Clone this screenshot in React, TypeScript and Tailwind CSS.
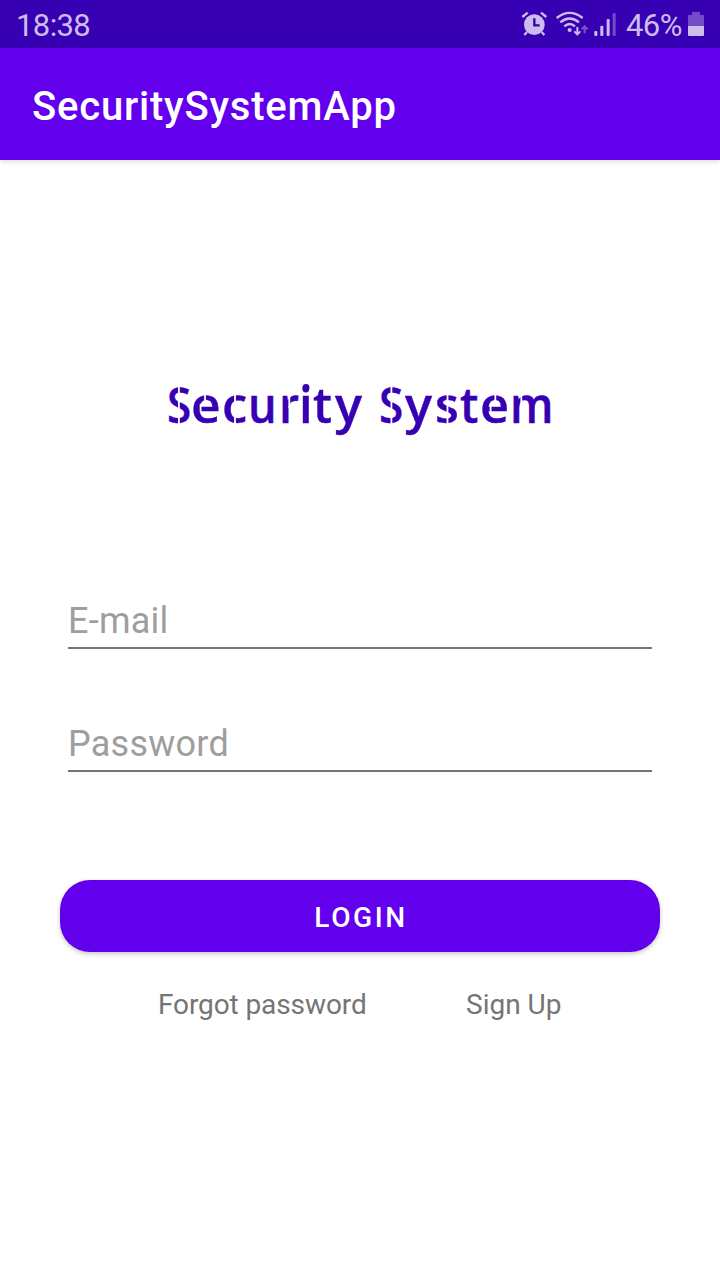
import type { CSSProperties } from "react";

type Glyph = { char: string; advance: number; shift: number; scale: number };

const TITLE: Glyph[] = [
  { char: "S", advance: 25, shift: -1, scale: 0.9 },
  { char: "e", advance: 30, shift: -2, scale: 1.05 },
  { char: "c", advance: 26, shift: -1, scale: 1.04 },
  { char: "u", advance: 31, shift: -1, scale: 0.92 },
  { char: "r", advance: 20, shift: -1, scale: 0.95 },
  { char: "i", advance: 13, shift: -1, scale: 1 },
  { char: "t", advance: 22, shift: 0, scale: 0.98 },
  { char: "y", advance: 45, shift: 0, scale: 1.03 },
  { char: "S", advance: 25, shift: -1, scale: 0.9 },
  { char: "y", advance: 30, shift: 0, scale: 1.03 },
  { char: "s", advance: 25, shift: 0, scale: 1 },
  { char: "t", advance: 21, shift: 0, scale: 0.95 },
  { char: "e", advance: 30, shift: -1, scale: 1.03 },
  { char: "m", advance: 40, shift: -1, scale: 0.93 },
];

function glyphStyle(g: Glyph): CSSProperties {
  return { width: g.advance, transform: `translateX(${g.shift}px) scaleX(${g.scale})` };
}

function StatusBar() {
  return (
    <div className="flex h-12 items-start bg-[#3700b3] pl-4 pr-4 text-[#cdbdec]">
      <span className="mt-[8px] text-[31px] leading-9 tracking-[-0.6px]">18:38</span>
      <svg className="ml-auto mt-[11px] h-[26px] w-[27px]" viewBox="33 33 81 78">
        <circle cx="73" cy="74" r="31" fill="currentColor" />
        <path d="M37 51L53 38M93 38L109 51" stroke="currentColor" strokeWidth="7" />
        <path d="M51 96L43 105M95 96L103 105" stroke="currentColor" strokeWidth="7" />
        <path d="M73 55V76H89" fill="none" stroke="#3700b3" strokeWidth="7" />
      </svg>
      <svg className="ml-[7px] mt-[11px] h-[26px] w-[34px]" viewBox="135 33 102 78" fill="none" stroke="currentColor">
        <path d="M140 54Q179 23 218 54M151 67Q179 44 207 67M163 79Q179 65 195 79" strokeWidth="7" />
        <circle cx="179" cy="90" r="6" fill="currentColor" stroke="none" />
        <path d="M202 81V102M193 94L202 103L211 94" strokeWidth="6" />
        <path d="M224 100V80M215 88L224 79L233 88" strokeWidth="6" opacity="0.45" />
      </svg>
      <svg className="ml-[5px] mt-[11px] h-[26px] w-[22px]" viewBox="252 33 66 78" fill="currentColor">
        <rect x="253" y="93" width="9" height="15" rx="3" />
        <rect x="271" y="77" width="9" height="31" rx="3" />
        <rect x="290" y="57" width="9" height="51" rx="3" />
        <rect x="308" y="39" width="9" height="69" rx="3" opacity="0.4" />
      </svg>
      <span className="ml-[10px] mt-[8px] w-[62px] whitespace-nowrap text-[31px] leading-9 tracking-[-0.6px]">46%</span>
      <svg className="mt-[11px] h-[26px] w-4" viewBox="234 33 48 78" fill="currentColor">
        <path d="M246 36H270V45H279Q282 45 282 48V78H234V48Q234 45 237 45H246Z" opacity="0.4" />
        <path d="M234 78H282V105Q282 108 279 108H237Q234 108 234 105Z" />
      </svg>
    </div>
  );
}

function Title() {
  return (
    <div className="relative mt-[203px] flex h-20 items-center pl-[168px] pt-px">
      <h1 className="flex font-['Open_Sans'] text-[49px] font-semibold leading-[80px] text-[#3700b3] [-webkit-text-stroke:0.4px_#3700b3]">
        {TITLE.map((g, i) => (
          <span key={i} className="inline-block origin-left" style={glyphStyle(g)}>
            {g.char}
          </span>
        ))}
      </h1>
      {/* Stencil bridges cut through the letters */}
      <svg className="absolute inset-0 h-20 w-[720px]" viewBox="0 363 720 80" fill="none" stroke="#fff" strokeWidth="1.8">
        <path d="M178.9 384V426M391.4 384V426" />
        <path d="M205 393V402M200.6 404V411.5M495.3 393V402M490.6 404V411.5" />
        <path d="M235 392V426M447.5 392V426" />
        <path d="M289.3 394V408M521.3 394V408" />
        <circle cx="306" cy="387.3" r="3.4" fill="#3700b3" stroke="none" />
      </svg>
    </div>
  );
}

function Field({ label }: { label: string }) {
  return (
    <input
      aria-label={label}
      placeholder={label}
      className="block h-[58px] w-full border-b-2 border-[#757575] bg-transparent pt-[4px] text-[36px] tracking-[0.25px] outline-none placeholder:text-[#9e9e9e]"
    />
  );
}

export default function App() {
  return (
    <main className="h-[1280px] w-[720px] overflow-hidden bg-white font-['Roboto',sans-serif]">
      <StatusBar />
      <header className="flex h-28 items-center bg-[#6200ee] pl-8 pt-[6px] text-[40px] font-medium tracking-[0.8px] text-white shadow-[0_2px_5px_rgba(0,0,0,0.12)]">
        SecuritySystemApp
      </header>
      <Title />
      <form className="mt-[148px] flex flex-col px-[68px]">
        <Field label="E-mail" />
        <div className="mt-[65px]">
          <Field label="Password" />
        </div>
      </form>
      <button className="mx-[60px] mt-[108px] block h-[72px] w-[600px] rounded-[30px] bg-[#6200ee] pl-[2px] pt-[4px] text-[28px] font-medium tracking-[2.6px] text-white shadow-[0_2px_5px_rgba(0,0,0,0.22)]">
        LOGIN
      </button>
      <nav className="mt-[34px] flex pl-[158px] text-[28px] leading-[38px] text-[#757575]">
        <a className="w-[308px] tracking-[-0.1px]">Forgot password</a>
        <a>Sign Up</a>
      </nav>
    </main>
  );
}
